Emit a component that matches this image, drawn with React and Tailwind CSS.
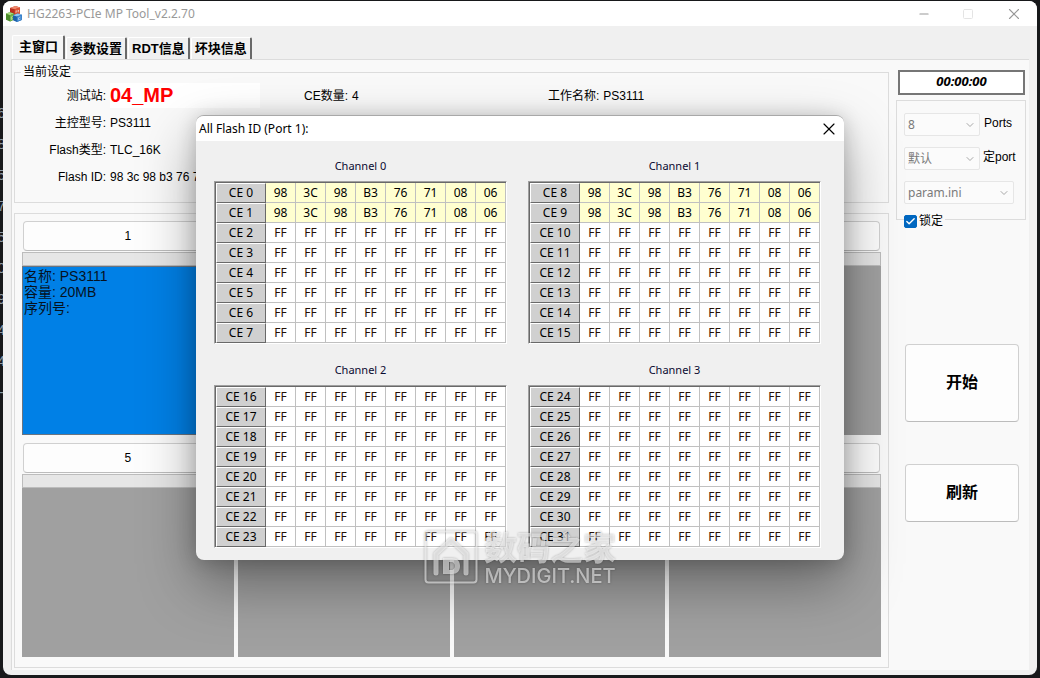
import React from "react";
import { Check, ChevronDown, Minus, Square, X } from "lucide-react";

const tabs = ["主窗口", "参数设置", "RDT信息", "坏块信息"];
const flashId = ["98", "3C", "98", "B3", "76", "71", "08", "06"];
const emptyId = Array(8).fill("FF");
const backdrop = ["6", "8", "5", "7", "5", "0", "9", "4", "4", "-"];

function AppIcon() {
  return (
    <svg viewBox="0 0 16 16" className="size-4 shrink-0" aria-hidden="true">
      <path d="M4 2 9.500 0l4.500 1.600-.3 6.200-5 1.400L4 7.400z" fill="#b92f1d" />
      <path d="M4 2 9.500 0l4.500 1.600-5.200 1.700z" fill="#ef8b6f" />
      <path d="m8.800 3.300 5.200-1.700-.3 6.200-5 1.400z" fill="#dc5335" />
      <path d="M0 7.600 3.800 6.200l4 1.300-.1 6.300-3.700 1.800L0 13.700z" fill="#4b8c2c" />
      <path d="M0 7.600 3.800 6.200l4 1.300L4 9.200z" fill="#a4d97e" />
      <path d="m4 9.200 3.800-1.700-.1 6.300L4 15.600z" fill="#6fb044" />
      <path d="m7 9.300 4.700-1.900 4.300 1.300-.3 5.200-4.900 2.100L7 14.200z" fill="#1c5fa8" />
      <path d="m7 9.300 4.700-1.900 4.300 1.300-5.100 1.900z" fill="#8fc6f2" />
      <path d="m10.900 10.600 5.100-1.900-.3 5.200-4.900 2.100z" fill="#3d86cf" />
      <path d="M10 7V4.600l1.200 1L12.500 4v2.200M6.700 10.300l-1.400.7v2.400l1.400-.7M14.500 11l-2 .8v2l2-.8" fill="none" stroke="#fff" strokeWidth=".6" strokeOpacity=".8" />
    </svg>
  );
}

function SelectBox({ label, value, className }) {
  return (
    <div className={`relative ${className}`}>
      <select
        aria-label={label}
        disabled
        className="block h-[23px] w-full appearance-none rounded-xs border border-[#e6e6e6] bg-[#fbfbfb] px-[3px] font-['Noto_Sans','Noto_Sans_CJK_SC',sans-serif] text-xs leading-5 text-[#7a7a7a] opacity-100"
      >
        <option>{value}</option>
      </select>
      <ChevronDown className="pointer-events-none absolute top-1.5 right-1 size-3 text-[#a8a8a8]" strokeWidth={2} />
    </div>
  );
}

function Port({ number, info }) {
  return (
    <div className="flex flex-col">
      <button className="mx-px h-[30px] rounded border border-[#d0d0d0] border-b-[#bcbcbc] bg-[#fdfdfd] text-xs text-black">
        {number}
      </button>
      <div className="mt-px h-3.5 border border-[#bcbcbc] bg-[#e6e6e6]" />
      {info ? (
        <div className="flex-1 border border-[#6a7480] bg-[#0080e6] py-px pl-px text-sm leading-4 text-[#06121e]">
          {info.map((line) => (
            <p key={line}>{line}</p>
          ))}
        </div>
      ) : (
        <div className="flex-1 bg-[#a0a0a0]" />
      )}
    </div>
  );
}

function ChannelTable({ channel }) {
  return (
    <div className="border border-t-[#a0a0a0] border-r-white border-b-white border-l-[#a0a0a0]">
      <table
        aria-label={`Channel ${channel}`}
        className="w-full table-fixed border-separate border-spacing-0 border-t border-l border-[#696969] text-center font-['Noto_Sans',sans-serif] text-xs leading-4 text-black"
      >
        <colgroup>
          <col className="w-[50px]" />
          <col span={8} />
        </colgroup>
        <tbody>
          {Array.from({ length: 8 }, (_, i) => {
            const used = channel < 2 && i < 2;
            return (
              <tr key={i} className="h-5">
                <th scope="row" className="border border-t-white border-r-[#696969] border-b-[#696969] border-l-white bg-[#d0d0d0] p-0 font-normal whitespace-nowrap">
                  CE {channel * 8 + i}
                </th>
                {(used ? flashId : emptyId).map((byte, j) => (
                  <td
                    key={j}
                    className={
                      used
                        ? "border-r border-b border-[#c0c0c0] bg-[#ffffd0] p-0"
                        : "border-r border-b border-[#c0c0c0] bg-white p-0 text-[#241004]"
                    }
                  >
                    {byte}
                  </td>
                ))}
              </tr>
            );
          })}
        </tbody>
      </table>
    </div>
  );
}

function FlashDialog() {
  return (
    <section
      role="dialog"
      aria-labelledby="flash-title"
      className="w-[648px] overflow-hidden rounded-lg border-t border-[#a8a8a8] bg-[#f0f0f0] shadow-[0_24px_56px_rgba(0,0,0,0.36),0_2px_20px_rgba(0,0,0,0.2)]"
    >
      <header className="flex h-[25px] items-center justify-between bg-white pr-[5px] pl-[3px]">
        <h2 id="flash-title" className="font-['Noto_Sans',sans-serif] text-xs leading-4 text-black">
          All Flash ID (Port 1):
        </h2>
        <button aria-label="Close" className="text-black">
          <X className="size-5" strokeWidth={1.4} />
        </button>
      </header>
      <div className="grid grid-cols-2 gap-x-[21px] gap-y-[18px] pt-[17px] pr-[23px] pb-3 pl-[18px]">
        {[0, 1, 2, 3].map((channel) => (
          <div key={channel}>
            <p className="mb-[7px] text-center font-['Noto_Sans',sans-serif] text-[11px] leading-4 text-[#0a0a30]">
              Channel {channel}
            </p>
            <ChannelTable channel={channel} />
          </div>
        ))}
      </div>
    </section>
  );
}

function Watermark() {
  return (
    <div className="pointer-events-none absolute bottom-[90px] left-1/2 flex -translate-x-1/2 items-start gap-1.5 text-white/55">
      <svg viewBox="0 0 54 54" className="size-[54px] drop-shadow-[0_0_1px_rgba(0,0,0,0.5)]" fill="none" stroke="currentColor" aria-hidden="true">
        <rect x="1.500" y="1.500" width="51" height="51" rx="3" strokeWidth="2" />
        <path d="M12 43V24L27 10l15 14v19" strokeWidth="5" strokeLinecap="round" strokeLinejoin="round" />
        <path fill="currentColor" stroke="none" fillRule="evenodd" d="M19 28h9c5 0 8 3 8 8s-3 8-8 8h-9zM25 32v8h2.500c2 0 3-1.500 3-4s-1-4-3-4z" />
      </svg>
      <div className="text-center drop-shadow-[0_0_1px_rgba(0,0,0,0.5)]">
        <p className="font-['Noto_Sans_CJK_SC',sans-serif] text-[33px] leading-8 font-bold whitespace-nowrap">数码之家</p>
        <p className="mt-0.5 font-['Inter',sans-serif] text-xl leading-6 font-medium">MYDIGIT.NET</p>
      </div>
    </div>
  );
}

function Field({ label, children }) {
  return (
    <div className="flex items-center gap-1">
      <span className="whitespace-nowrap">{label}:</span>
      <span>{children}</span>
    </div>
  );
}

export default function App() {
  return (
    <div className="relative flex min-h-screen bg-[#17181a] pt-px pb-[3px] font-['Liberation_Sans','Noto_Sans_CJK_SC',sans-serif] text-xs leading-4 text-black">
      <div className="w-[3px] shrink-0 overflow-hidden pt-[97px] text-sm leading-[31px] text-[#8d9aa5]" aria-hidden="true">
        {backdrop.map((c, i) => (
          <p key={i} className="flex justify-center">{c}</p>
        ))}
      </div>

      <main className="mr-[3px] flex flex-1 flex-col overflow-hidden rounded-lg bg-[#f0f0f0]">
        <header className="flex h-[25px] items-center gap-[5px] bg-white pr-3.5 pl-[3px]">
          <AppIcon />
          <h1 className="flex-1 font-['Noto_Sans',sans-serif] text-xs leading-4 text-[#999999]">HG2263-PCIe MP Tool_v2.2.70</h1>
          <div className="flex items-center gap-[31px] text-[#999999]">
            <button aria-label="Minimize"><Minus className="size-3.5" strokeWidth={2} /></button>
            <button aria-label="Maximize" disabled className="text-[#e4e4e4]"><Square className="size-3" strokeWidth={2} /></button>
            <button aria-label="Close"><X className="size-[18px]" strokeWidth={1.5} /></button>
          </div>
        </header>

        <nav role="tablist" className="flex items-end gap-px pt-[9px] pl-[9px] text-[13px] leading-4 font-bold">
          {tabs.map((tab, i) => (
            <button
              key={tab}
              role="tab"
              aria-selected={i === 0}
              className={
                i === 0
                  ? "h-6 rounded-t-xs border-t border-r-2 border-l border-t-white border-r-[#696969] border-l-white bg-[#f4f4f4] pr-[5px] pb-0.5 pl-1.5"
                  : "h-[22px] rounded-t-xs border-t border-r-2 border-l border-t-white border-r-[#696969] border-l-white px-[3px]"
              }
            >
              {tab}
            </button>
          ))}
        </nav>

        <div className="mr-2 mb-[5px] ml-2 flex flex-1 gap-[7px] border-t border-l border-[#dcdcdc] bg-[#f9f9f9] pr-[3px] pl-0.5">
          <div className="flex flex-1 flex-col gap-2.5 pt-[5px] pb-0.5">
            <fieldset className="h-[138px] border border-[#dcdcdc]">
              <legend className="ml-1.5 px-0.5 leading-[14px]">当前设定</legend>
              <div className="grid auto-rows-[27px] grid-cols-[289px_244px_1fr] items-center pt-[3px]">
                <div className="flex items-center gap-1">
                  <label htmlFor="station" className="w-[91px] text-right">测试站:</label>
                  <input
                    id="station"
                    readOnly
                    defaultValue="04_MP"
                    className="h-[25px] w-[150px] bg-white text-xl leading-6 font-bold text-[#ff0000] outline-none"
                  />
                </div>
                <Field label="CE数量">4</Field>
                <Field label="工作名称">PS3111</Field>
                {[
                  ["主控型号", "PS3111"],
                  ["Flash类型", "TLC_16K"],
                  ["Flash ID", "98 3c 98 b3 76 71 08 06"],
                ].map(([label, value]) => (
                  <div key={label} className="col-span-3 flex gap-1">
                    <span className="w-[91px] text-right">{label}:</span>
                    <span>{value}</span>
                  </div>
                ))}
              </div>
            </fieldset>

            <section aria-label="Ports" className="grid flex-1 auto-rows-fr grid-cols-4 gap-x-1 gap-y-2 border border-[#dcdcdc] px-[7px] pt-[7px] pb-2.5">
              {[1, 2, 3, 4, 5, 6, 7, 8].map((n) => (
                <Port key={n} number={n} info={n === 1 ? ["名称: PS3111", "容量: 20MB", "序列号:"] : null} />
              ))}
            </section>
          </div>

          <aside className="flex w-[130px] flex-col pt-2.5">
            <output className="mr-px ml-0.5 block h-[25px] border-2 border-[#767676] bg-white text-center font-['Open_Sans',sans-serif] text-[13px] leading-[18px] font-bold italic">
              00:00:00
            </output>
            <div className="mt-[5px] flex flex-col gap-[11px] border border-[#dcdcdc] px-[7px] pt-3 pb-[15px]">
              <div className="flex gap-1 whitespace-nowrap">
                <SelectBox label="Ports" value="8" className="w-[76px] shrink-0" />
                <span className="pt-0.5">Ports</span>
              </div>
              <div className="flex gap-[3px] whitespace-nowrap">
                <SelectBox label="定port" value="默认" className="w-[76px] shrink-0" />
                <span className="pt-0.5">定port</span>
              </div>
              <SelectBox label="Parameter file" value="param.ini" className="w-[110px]" />
            </div>
            <label className="-mt-1.5 ml-2 flex items-center gap-0.5 self-start bg-[#f9f9f9] pr-0.5 leading-[14px]">
              <span className="grid">
                <input type="checkbox" defaultChecked className="peer col-start-1 row-start-1 size-[13px] appearance-none rounded-xs border border-[#888888] bg-white checked:border-[#0067c0] checked:bg-[#0067c0]" />
                <Check className="pointer-events-none col-start-1 row-start-1 m-auto hidden size-[11px] text-white peer-checked:block" strokeWidth={3} />
              </span>
              锁定
            </label>
            <div className="mt-[116px] mr-[7px] ml-[9px] flex flex-col gap-[42px] text-base font-bold">
              <button className="h-[78px] rounded border border-[#d0d0d0] border-b-[#bcbcbc] bg-[#fdfdfd]">开始</button>
              <button className="h-[58px] rounded border border-[#d0d0d0] border-b-[#bcbcbc] bg-[#fdfdfd]">刷新</button>
            </div>
          </aside>
        </div>
      </main>

      <div className="absolute inset-0 flex items-center justify-center pb-[3px]">
        <FlashDialog />
        <Watermark />
      </div>
    </div>
  );
}
